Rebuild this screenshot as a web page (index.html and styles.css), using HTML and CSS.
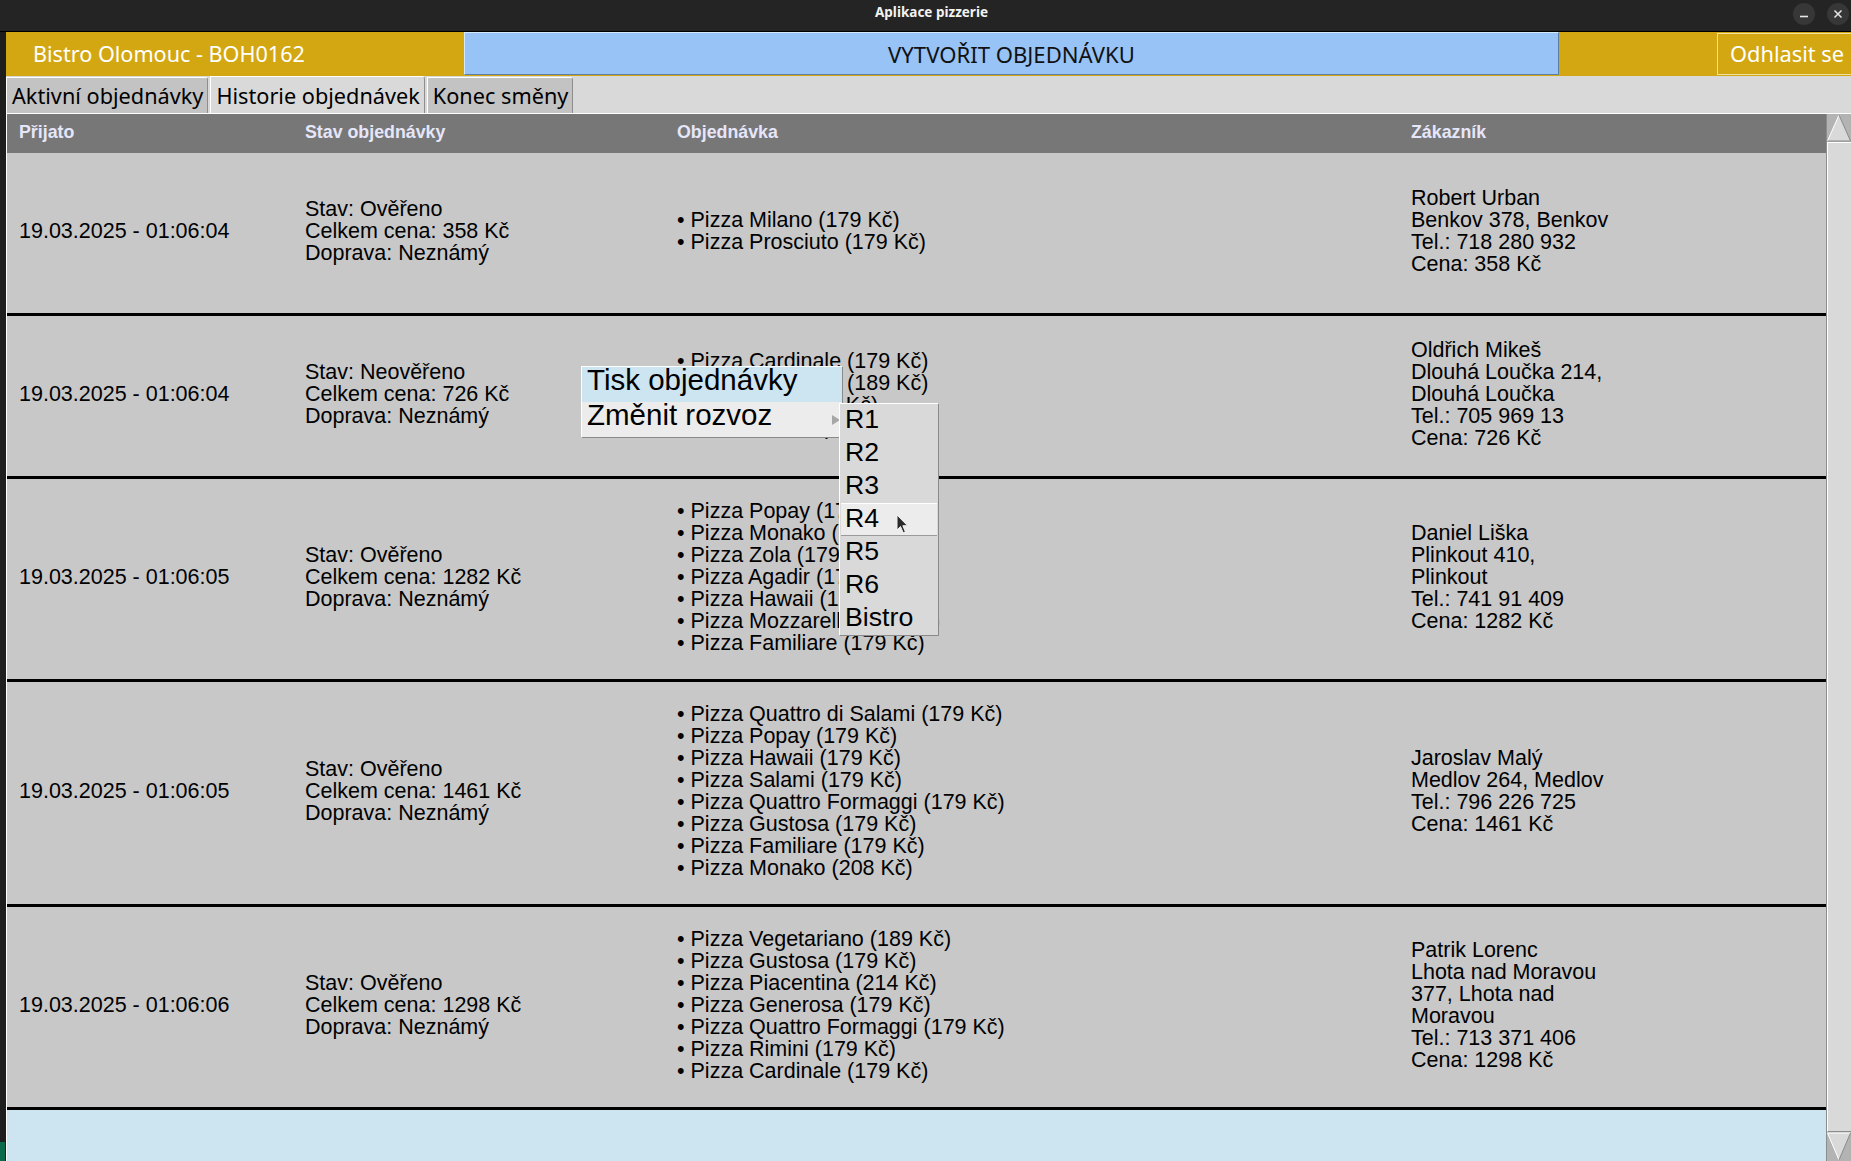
FILE: index.html
```html
<!DOCTYPE html>
<html lang="cs">
<head>
<meta charset="utf-8">
<title>Aplikace pizzerie</title>
<link rel="stylesheet" href="styles.css">
</head>
<body>
<div class="window">
  <div class="titlebar">
    <span class="title">Aplikace pizzerie</span>
    <div class="wm">
      <span class="wm-btn"><svg width="10" height="10" viewBox="0 0 10 10"><line x1="1" y1="7.5" x2="9" y2="7.5" stroke="#e6e6e6" stroke-width="1.6"/></svg></span>
      <span class="wm-btn"><svg width="10" height="10" viewBox="0 0 10 10"><path d="M1.5 1.5 L8.5 8.5 M8.5 1.5 L1.5 8.5" stroke="#e6e6e6" stroke-width="1.5"/></svg></span>
    </div>
  </div>
  <div class="frame">
    <div class="edge"><div class="edge-accent"></div></div>
    <div class="app">
      <header class="topbar">
        <div class="brand">Bistro Olomouc - BOH0162</div>
        <div class="create">VYTVOŘIT OBJEDNÁVKU</div>
        <div class="spacer"></div>
        <div class="logout">Odhlasit se</div>
      </header>
      <nav class="tabs">
        <div class="tab">Aktivní objednávky</div>
        <div class="tab active">Historie objednávek</div>
        <div class="tab">Konec směny</div>
      </nav>
      <div class="content">
        <div class="table">
          <div class="thead">
            <div>Přijato</div>
            <div>Stav objednávky</div>
            <div>Objednávka</div>
            <div>Zákazník</div>
          </div>

          <div class="row">
            <div>19.03.2025 - 01:06:04</div>
            <div><div>Stav: Ověřeno</div><div>Celkem cena: 358 Kč</div><div>Doprava: Neznámý</div></div>
            <ul class="items">
              <li>Pizza Milano (179 Kč)</li>
              <li>Pizza Prosciuto (179 Kč)</li>
            </ul>
            <div><div>Robert Urban</div><div>Benkov 378, Benkov</div><div>Tel.: 718 280 932</div><div>Cena: 358 Kč</div></div>
          </div>

          <div class="row">
            <div>19.03.2025 - 01:06:04</div>
            <div><div>Stav: Neověřeno</div><div>Celkem cena: 726 Kč</div><div>Doprava: Neznámý</div></div>
            <ul class="items">
              <li>Pizza Cardinale (179 Kč)</li>
              <li>Pizza Mexicana (189 Kč)</li>
              <li>Pizza Zola (179 Kč)</li>
              <li>Pizza Salami (179 Kč)</li>
            </ul>
            <div><div>Oldřich Mikeš</div><div>Dlouhá Loučka 214,</div><div>Dlouhá Loučka</div><div>Tel.: 705 969 13</div><div>Cena: 726 Kč</div></div>
          </div>

          <div class="row">
            <div>19.03.2025 - 01:06:05</div>
            <div><div>Stav: Ověřeno</div><div>Celkem cena: 1282 Kč</div><div>Doprava: Neznámý</div></div>
            <ul class="items">
              <li>Pizza Popay (179 Kč)</li>
              <li>Pizza Monako (208 Kč)</li>
              <li>Pizza Zola (179 Kč)</li>
              <li>Pizza Agadir (179 Kč)</li>
              <li>Pizza Hawaii (179 Kč)</li>
              <li>Pizza Mozzarella (179 Kč)</li>
              <li>Pizza Familiare (179 Kč)</li>
            </ul>
            <div><div>Daniel Liška</div><div>Plinkout 410,</div><div>Plinkout</div><div>Tel.: 741 91 409</div><div>Cena: 1282 Kč</div></div>
          </div>

          <div class="row">
            <div>19.03.2025 - 01:06:05</div>
            <div><div>Stav: Ověřeno</div><div>Celkem cena: 1461 Kč</div><div>Doprava: Neznámý</div></div>
            <ul class="items">
              <li>Pizza Quattro di Salami (179 Kč)</li>
              <li>Pizza Popay (179 Kč)</li>
              <li>Pizza Hawaii (179 Kč)</li>
              <li>Pizza Salami (179 Kč)</li>
              <li>Pizza Quattro Formaggi (179 Kč)</li>
              <li>Pizza Gustosa (179 Kč)</li>
              <li>Pizza Familiare (179 Kč)</li>
              <li>Pizza Monako (208 Kč)</li>
            </ul>
            <div><div>Jaroslav Malý</div><div>Medlov 264, Medlov</div><div>Tel.: 796 226 725</div><div>Cena: 1461 Kč</div></div>
          </div>

          <div class="row">
            <div>19.03.2025 - 01:06:06</div>
            <div><div>Stav: Ověřeno</div><div>Celkem cena: 1298 Kč</div><div>Doprava: Neznámý</div></div>
            <ul class="items">
              <li>Pizza Vegetariano (189 Kč)</li>
              <li>Pizza Gustosa (179 Kč)</li>
              <li>Pizza Piacentina (214 Kč)</li>
              <li>Pizza Generosa (179 Kč)</li>
              <li>Pizza Quattro Formaggi (179 Kč)</li>
              <li>Pizza Rimini (179 Kč)</li>
              <li>Pizza Cardinale (179 Kč)</li>
            </ul>
            <div><div>Patrik Lorenc</div><div>Lhota nad Moravou</div><div>377, Lhota nad</div><div>Moravou</div><div>Tel.: 713 371 406</div><div>Cena: 1298 Kč</div></div>
          </div>

          <div class="filler"></div>
        </div>
        <div class="scrollbar">
          <div class="sb-arrow sb-up">
            <svg width="24" height="28" viewBox="0 0 24 28">
              <polygon points="0.5,27 12,1 23.5,27" fill="#d9d9d9"/>
              <polyline points="0.5,27 12,1" fill="none" stroke="#ffffff" stroke-width="1"/>
              <polyline points="12,1 23.5,27 0.5,27" fill="none" stroke="#8a8a8a" stroke-width="1"/>
            </svg>
          </div>
          <div class="sb-thumb"></div>
          <div class="sb-arrow sb-down">
            <svg width="24" height="29" viewBox="0 0 24 29">
              <polygon points="0.5,1 23.5,1 12,28" fill="#d9d9d9"/>
              <polyline points="12,28 0.5,1 23.5,1" fill="none" stroke="#ffffff" stroke-width="1"/>
              <polyline points="23.5,1 12,28" fill="none" stroke="#8a8a8a" stroke-width="1"/>
            </svg>
          </div>
        </div>
      </div>
    </div>
  </div>

  <div class="ctx">
    <div class="ctx-item hl">Tisk objednávky</div>
    <div class="ctx-item">Změnit rozvoz<span class="ctx-arrow"></span></div>
  </div>
  <div class="sub">
    <div class="sub-item">R1</div>
    <div class="sub-item">R2</div>
    <div class="sub-item">R3</div>
    <div class="sub-item hl">R4</div>
    <div class="sub-item">R5</div>
    <div class="sub-item">R6</div>
    <div class="sub-item">Bistro</div>
  </div>
  <svg class="cursor" width="13" height="21" viewBox="0 0 13 21">
    <path d="M1 1 L1 16 L4.5 12.5 L7.2 18.8 L9.4 17.8 L6.8 11.7 L11.5 11.7 Z" fill="#2a2a2a" stroke="#f0f0f0" stroke-width="1"/>
  </svg>
</div>
</body>
</html>
```
FILE: styles.css
```css
* { box-sizing: border-box; }
html, body {
  margin: 0;
  padding: 0;
  width: 1851px;
  height: 1161px;
  overflow: hidden;
  background: #1e1e1e;
}
.window {
  position: relative;
  display: flex;
  flex-direction: column;
  height: 1161px;
}

/* title bar */
.titlebar {
  height: 32px;
  background: #242424;
  border-bottom: 1px solid #000;
  display: grid;
  grid-template-columns: 1fr auto 1fr;
  align-items: start;
  padding-left: 12px;
}
.title {
  grid-column: 2;
  padding-top: 3px;
  font-family: "Noto Sans", sans-serif;
  font-weight: 700;
  font-size: 13.5px;
  line-height: 19px;
  color: #f2f2f2;
}
.wm {
  grid-column: 3;
  justify-self: end;
  margin-top: 3px;
  padding-right: 2px;
  display: flex;
  gap: 12px;
}
.wm-btn {
  width: 22px;
  height: 22px;
  border-radius: 50%;
  background: #373737;
  display: flex;
  align-items: center;
  justify-content: center;
}

/* frame */
.frame {
  flex: 1;
  display: flex;
  min-height: 0;
}
.edge {
  width: 6px;
  background: #1e1e1e;
  display: flex;
  flex-direction: column;
  justify-content: flex-end;
}
.edge-accent {
  width: 5px;
  height: 19px;
  background: #0c6a4c;
}
.app {
  flex: 1;
  min-width: 0;
  display: flex;
  flex-direction: column;
  background: #d9d9d9;
}

/* top bar */
.topbar {
  height: 44px;
  background: #d3a712;
  display: flex;
  align-items: flex-start;
  font-family: "Noto Sans", sans-serif;
  font-size: 21.8px;
}
.brand {
  width: 458px;
  height: 43px;
  padding-left: 27px;
  display: flex;
  align-items: center;
  font-size: 21.6px;
  color: #ffffff;
}
.create {
  width: 1095px;
  height: 43px;
  background: #97c3f6;
  border: 1px solid;
  border-color: #d6e8fc #5f7ea3 #5f7ea3 #d6e8fc;
  display: flex;
  align-items: center;
  justify-content: center;
  font-size: 22.1px;
  color: #111;
}
.spacer { flex: 1; }
.logout {
  width: 134px;
  height: 42px;
  margin-top: 1px;
  border: 1px solid #efe0a6;
  border-right: none;
  padding-left: 12px;
  padding-bottom: 2px;
  display: flex;
  align-items: center;
  color: #ffffff;
}

/* tabs */
.tabs {
  height: 38px;
  display: flex;
  align-items: flex-end;
  gap: 2px;
  border-bottom: 1px solid #ffffff;
  background: #d9d9d9;
}
.tab {
  height: 36px;
  padding: 0 4px 0 5px;
  background: #c3c3c3;
  border-top: 1px solid #ffffff;
  border-left: 1px solid #ffffff;
  border-right: 1px solid #8e8e8e;
  border-top-right-radius: 3px;
  display: flex;
  align-items: center;
  font-family: "Noto Sans", sans-serif;
  font-size: 21.7px;
  color: #000;
}
.tab.active {
  height: 37px;
  background: #d9d9d9;
}

/* table */
.content {
  flex: 1;
  min-height: 0;
  display: flex;
  border-left: 1px solid #ffffff;
}
.table {
  flex: 1;
  min-width: 0;
  display: flex;
  flex-direction: column;
}
.thead, .row {
  display: grid;
  grid-template-columns: 286px 372px 734px 1fr;
  align-items: center;
}
.thead > *, .row > * {
  padding-left: 12px;
}
.thead {
  height: 39px;
  padding-bottom: 2px;
  background: #777777;
  font-family: "Liberation Sans", Arial, sans-serif;
  font-weight: 700;
  font-size: 17.8px;
  color: #e6e6fa;
}
.row {
  min-height: 163px;
  padding: 21px 0 25px;
  background: #c8c8c8;
  border-bottom: 3px solid #000;
  font-family: "Liberation Sans", Arial, sans-serif;
  font-size: 21.5px;
  line-height: 22px;
  color: #000;
}
.items {
  list-style: none;
  margin: 0;
}
.items li::before {
  content: "\2022\00a0";
}
.filler {
  flex: 1;
  background: #cde5f1;
}

/* scrollbar */
.scrollbar {
  width: 25px;
  display: flex;
  flex-direction: column;
  border-left: 1px solid #8c8c8c;
  background: #b3b3b3;
}
.sb-arrow svg { display: block; }
.sb-up { height: 28px; }
.sb-down { height: 29px; }
.sb-thumb {
  flex: 1;
  background: #d9d9d9;
  border-top: 1px solid #ffffff;
  border-left: 1px solid #ffffff;
  border-bottom: 1px solid #8c8c8c;
}

/* context menu */
.ctx, .sub {
  position: absolute;
  border: 1px solid;
  border-color: #ffffff #8a8a8a #8a8a8a #ffffff;
  font-family: "Liberation Sans", Arial, sans-serif;
  color: #000;
}
.ctx {
  left: 581px;
  top: 366px;
  width: 262px;
  background: #ececec;
  font-size: 29.5px;
}
.ctx-item {
  position: relative;
  height: 35px;
  line-height: 26px;
  padding-left: 5px;
}
.ctx-item.hl {
  background: #cde4f1;
}
.ctx-arrow {
  position: absolute;
  right: 2px;
  top: 13px;
  width: 0;
  height: 0;
  border-left: 8px solid #a6a6a6;
  border-top: 5px solid transparent;
  border-bottom: 5px solid transparent;
}
.sub {
  left: 839px;
  top: 403px;
  width: 100px;
  background: #d9d9d9;
  font-size: 26.7px;
}
.sub-item {
  height: 33px;
  line-height: 31px;
  padding-left: 5px;
}
.sub-item.hl {
  margin: 0 1px;
  padding-left: 4px;
  line-height: 29px;
  background: #ececec;
  border-top: 1px solid #ffffff;
  border-bottom: 1px solid #9a9a9a;
}
.cursor {
  position: absolute;
  left: 896px;
  top: 514px;
}
```
